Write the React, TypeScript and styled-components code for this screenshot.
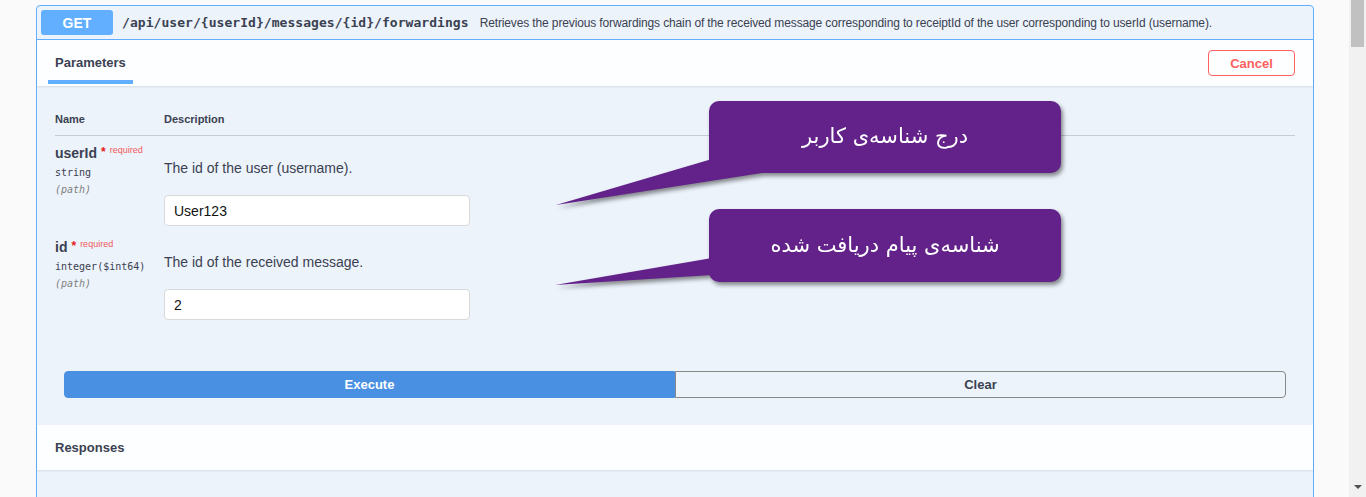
import React from "react";
import styled, { createGlobalStyle } from "styled-components";

type Param = {
    name: string,
    type: string,
    description: string,
    value: string
}

type Note = {
    top: number,
    height: number,
    tail: string,
    text: string
}

const PARAMS: Param[] = [
    { name: "userId", type: "string", description: "The id of the user (username).", value: "User123" },
    { name: "id", type: "integer($int64)", description: "The id of the received message.", value: "2" },
]

// callouts are drawn over the block, coordinates relative to the block
const NOTES: Note[] = [
    { top: 95, height: 72, tail: "162,58 6,104 212,72", text: "درج شناسه‌ی کاربر" },
    { top: 203, height: 73, tail: "162,49 5,76 162,66", text: "شناسه‌ی پیام دریافت شده" },
]

const GlobalStyle = createGlobalStyle`
    html, body {
        margin: 0;
        padding: 0;
        background: #fafafa;
        overflow: hidden;
    }
    body {
        font-family: "Liberation Sans", Arial, sans-serif;
        color: #3b4151;
    }
`

const App = (): JSX.Element => {
    return (
        <>
            <GlobalStyle />
            <Page>
                <Main>
                    <OpBlock>
                        <Summary>
                            <Method>GET</Method>
                            <Path>/api/user/{"{userId}"}/messages/{"{id}"}/forwardings</Path>
                            <SummaryText>Retrieves the previous forwardings chain of the received message corresponding to receiptId of the user corresponding to userId (username).</SummaryText>
                        </Summary>
                        <SectionHeader>
                            <Tab>Parameters</Tab>
                            <CancelButton>Cancel</CancelButton>
                        </SectionHeader>
                        <ParamsBody>
                            <TableHead>
                                <HeadCell>Name</HeadCell>
                                <HeadCell>Description</HeadCell>
                            </TableHead>
                            {PARAMS.map((p) => (
                                <ParamRow key={p.name}>
                                    <NameCell>
                                        <ParamName>
                                            {p.name}
                                            <Star>*</Star>
                                            <Required>required</Required>
                                        </ParamName>
                                        <ParamType>{p.type}</ParamType>
                                        <ParamIn>(path)</ParamIn>
                                    </NameCell>
                                    <DescCell>
                                        <DescText>{p.description}</DescText>
                                        <Input defaultValue={p.value} />
                                    </DescCell>
                                </ParamRow>
                            ))}
                        </ParamsBody>
                        <ExecuteWrapper>
                            <ExecuteButton>Execute</ExecuteButton>
                            <ClearButton>Clear</ClearButton>
                        </ExecuteWrapper>
                        <SectionHeader $short>
                            <SectionTitle>Responses</SectionTitle>
                        </SectionHeader>
                        {NOTES.map((n) => (
                            <Callout key={n.text} $top={n.top}>
                                <TailSvg width="220" height="110" viewBox="0 0 220 110">
                                    <polygon points={n.tail} fill="#63218a" />
                                </TailSvg>
                                <Bubble $height={n.height}>{n.text}</Bubble>
                            </Callout>
                        ))}
                    </OpBlock>
                </Main>
                <ScrollTrack>
                    <ScrollThumb />
                    <ScrollArrow />
                </ScrollTrack>
            </Page>
        </>
    )
}

export default App

const Page = styled.div`
    display: flex;
    width: 1366px;
    height: 497px;
    overflow: hidden;
`
const Main = styled.div`
    flex: 1;
    padding: 5px 35px 0 36px;
`
const OpBlock = styled.div`
    position: relative;
    border: 1px solid #61affe;
    border-radius: 4px;
    background: #ecf3fb;
    height: 600px;
`
const Summary = styled.div`
    display: flex;
    align-items: center;
    height: 33px;
    padding: 0 4px;
    border-bottom: 1px solid #61affe;
`
const Method = styled.div`
    width: 72px;
    height: 25px;
    border-radius: 3px;
    background: #61affe;
    color: #fff;
    font-weight: 700;
    font-size: 14px;
    display: flex;
    align-items: center;
    justify-content: center;
    margin-right: 9px;
`
const Path = styled.span`
    font-family: "DejaVu Sans Mono", monospace;
    font-weight: 700;
    font-size: 13px;
    color: #3b4151;
    margin-right: 11px;
    letter-spacing: 0.05px;
`
const SummaryText = styled.span`
    font-size: 12px;
    color: #3b4151;
    letter-spacing: -0.13px;
`
const SectionHeader = styled.div<{ $short?: boolean }>`
    display: flex;
    align-items: center;
    justify-content: space-between;
    height: ${props => props.$short ? 45 : 46}px;
    padding: 0 18px 0 11px;
    background: #fdfeff;
    box-shadow: 0 1px 2px rgba(0, 0, 0, 0.1);
`
const Tab = styled.div`
    align-self: stretch;
    display: flex;
    align-items: center;
    padding: 0 7px;
    font-size: 13px;
    font-weight: 700;
    border-bottom: 4px solid #61affe;
    box-sizing: border-box;
    padding-top: 4px;
    margin-bottom: 2px;
`
const SectionTitle = styled.div`
    font-size: 13px;
    font-weight: 700;
    padding-left: 7px;
`
const CancelButton = styled.button`
    width: 87px;
    height: 26px;
    border: 1px solid #ff6060;
    border-radius: 4px;
    background: transparent;
    color: #ff6060;
    font-family: "Liberation Sans", Arial, sans-serif;
    font-size: 13px;
    font-weight: 700;
`
const ParamsBody = styled.div`
    padding: 26px 18px 4px 18px;
`
const TableHead = styled.div`
    display: grid;
    grid-template-columns: 109px 1fr;
    padding-bottom: 9px;
    border-bottom: 1px solid #c4ccd6;
`
const HeadCell = styled.div`
    font-size: 11px;
    font-weight: 700;
    line-height: 14px;
`
const ParamRow = styled.div`
    display: grid;
    grid-template-columns: 109px 1fr;
    padding-bottom: 4px;
`
const NameCell = styled.div`
    padding-top: 8px;
`
const ParamName = styled.div`
    font-size: 14px;
    font-weight: 700;
    line-height: 18px;
    display: flex;
    align-items: flex-start;
`
const Star = styled.span`
    color: #e41b1b;
    font-size: 12px;
    margin-left: 4px;
    line-height: 16px;
`
const Required = styled.span`
    color: #f05a5a;
    font-size: 9px;
    font-weight: 400;
    margin-left: 4px;
    line-height: 12px;
`
const ParamType = styled.div`
    font-family: "DejaVu Sans Mono", monospace;
    font-size: 10px;
    line-height: 17px;
    margin-top: 2px;
`
const ParamIn = styled.div`
    font-family: "DejaVu Sans Mono", monospace;
    font-size: 10px;
    font-style: italic;
    line-height: 17px;
    color: #808080;
`
const DescCell = styled.div`
    padding-top: 23px;
`
const DescText = styled.div`
    font-size: 14px;
    line-height: 18px;
`
const Input = styled.input`
    display: block;
    box-sizing: border-box;
    width: 306px;
    height: 31px;
    margin-top: 18px;
    padding: 0 9px;
    border: 1px solid #d9d9d9;
    border-radius: 4px;
    background: #fff;
    font-family: "Liberation Sans", Arial, sans-serif;
    font-size: 14px;
    color: #111;
    outline: none;
`
const ExecuteWrapper = styled.div`
    display: flex;
    padding: 43px 27px 27px 27px;
`
const ExecuteButton = styled.button`
    flex: 1;
    height: 27px;
    border: 1px solid #4990e2;
    border-radius: 4px 0 0 4px;
    background: #4990e2;
    color: #fff;
    font-family: "Liberation Sans", Arial, sans-serif;
    font-size: 13px;
    font-weight: 700;
`
const ClearButton = styled.button`
    flex: 1;
    height: 27px;
    border: 1px solid #888;
    border-radius: 0 4px 4px 0;
    background: transparent;
    color: #3b4151;
    font-family: "Liberation Sans", Arial, sans-serif;
    font-size: 13px;
    font-weight: 700;
`
const Callout = styled.div<{ $top: number }>`
    position: absolute;
    left: 513px;
    top: ${props => props.$top}px;
    width: 512px;
    filter: drop-shadow(2px 3px 2px rgba(0, 0, 0, 0.45));
`
const TailSvg = styled.svg`
    position: absolute;
    left: 0;
    top: 0;
`
const Bubble = styled.div<{ $height: number }>`
    position: relative;
    margin-left: 159px;
    width: 352px;
    height: ${props => props.$height}px;
    border-radius: 10px;
    background: #63218a;
    color: #fff;
    font-family: "DejaVu Sans", sans-serif;
    font-size: 21px;
    direction: rtl;
    display: flex;
    align-items: center;
    justify-content: center;
    padding-bottom: 2px;
    box-sizing: border-box;
`
const ScrollTrack = styled.div`
    width: 17px;
    background: #f1f1f1;
    display: flex;
    flex-direction: column;
    align-items: center;
    justify-content: space-between;
`
const ScrollThumb = styled.div`
    width: 13px;
    height: 47px;
    background: #c1c1c1;
`
const ScrollArrow = styled.div`
    width: 0;
    height: 0;
    border-left: 4px solid transparent;
    border-right: 4px solid transparent;
    border-top: 4px solid #505050;
    margin-bottom: 8px;
`
